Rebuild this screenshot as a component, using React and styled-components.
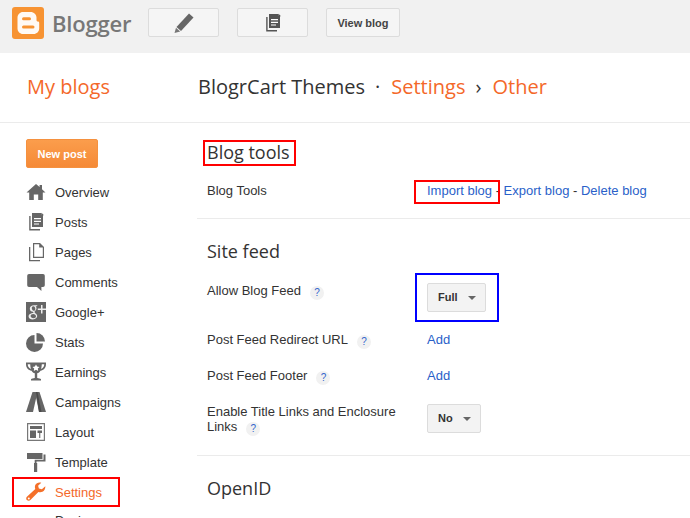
import React from 'react'
import styled, { createGlobalStyle } from 'styled-components'

const GlobalStyle = createGlobalStyle`
  html, body {
    margin: 0;
    padding: 0;
    height: 518px;
    overflow: hidden;
    background: #fff;
  }
  body {
    font-family: "Liberation Sans", Arial, sans-serif;
    font-size: 13px;
    color: #333;
  }
`

const PencilIcon = () => (
  <svg width="20" height="20" viewBox="0 0 20 20">
    <path d="M15 0.500l4.500 4L7 18l-4.500-4z" fill="#666" />
    <path d="M2 14.800l4.200 3.800-5.700 1.400z" fill="#777" />
  </svg>
)

const PostsIcon = ({ color = '#666' }) => (
  <svg width="20" height="20" viewBox="0 0 20 20">
    <path d="M6 1h9.500v1.600H17V15H6z" fill={color} />
    <path d="M15.500 0.800L18 3.200h-2.500z" fill={color} />
    <path d="M8 6h7v1.200H8zM8 8.700h7v1.200H8zM8 11.400h5v1.200H8z" fill="#fff" />
    <path d="M3.200 4H4.600v13H14v1.600H3.200z" fill={color} />
  </svg>
)

const HomeIcon = () => (
  <svg width="20" height="20" viewBox="0 0 20 20">
    <path d="M10 2L0.500 10.500h2.700V18h4.600v-5.500h4.400V18h4.600v-7.500h2.700L16 7.200V3h-2.400v2z" fill="#666" />
  </svg>
)

const PagesIcon = () => (
  <svg width="20" height="20" viewBox="0 0 20 20">
    <path d="M7 1h7l4 4v11H7zM8.200 2.200v12.600h8.600V5.600h-3.600V2.200z" fill="#666" />
    <path d="M3 5h1.300v13H14v1.200H3z" fill="#666" />
  </svg>
)

const CommentIcon = () => (
  <svg width="20" height="20" viewBox="0 0 20 20">
    <path d="M3 2h14a1.800 1.800 0 0 1 1.800 1.800v9.400A1.800 1.800 0 0 1 17 15h-1.600v4l-4.400-4H3a1.800 1.800 0 0 1-1.800-1.800V3.800A1.800 1.800 0 0 1 3 2z" fill="#666" />
  </svg>
)

const GooglePlusIcon = () => (
  <svg width="20" height="20" viewBox="0 0 20 20">
    <rect width="20" height="20" fill="#666" />
    <path d="M8 3.200c-2.500 0-4.200 1.500-4.200 3.500 0 1.800 1.400 3.100 3.100 3.100l.7 1.300c-2.500.2-5 1.100-5 3.300 0 1.900 2 3 4.200 3 2.700 0 4.400-1.500 4.400-3.300 0-2.400-2.700-2.800-2.700-4.100 0-1 2-1.500 2-3.700 0-1-.5-1.700-1-2.100h1.200l.9-1z" fill="#eee" />
    <path d="M7.300 4.300c1.200 0 2 1.300 2 2.700 0 1-.6 1.800-1.500 1.800-1.300 0-2-1.400-2-2.700 0-1.100.6-1.800 1.500-1.800zM7.200 12c1.600 0 2.800 1 2.800 2.300 0 1.200-1 1.900-2.500 1.900-1.700 0-2.900-.9-2.900-2.100 0-1.300 1.100-2.100 2.600-2.100z" fill="#666" />
    <path d="M15 3h1.500v3.500H20V8h-3.500v3.500H15V8h-3.200V6.500H15z" fill="#eee" />
  </svg>
)

const StatsIcon = () => (
  <svg width="20" height="20" viewBox="0 0 20 20">
    <path d="M8.500 3v8.500H17A8.500 8.500 0 1 1 8.500 3z" fill="#666" />
    <path d="M10.500 1A8.500 8.500 0 0 1 19 9.500h-8.500z" fill="#666" />
  </svg>
)

const TrophyIcon = () => (
  <svg width="20" height="20" viewBox="0 0 20 20">
    <path d="M0 0.500h20v1.500c0 4-2.500 6.300-5.500 6.800-.9 1.400-2 2.200-3.300 2.500v4.700c1.500.2 3.300.6 3.800 1.300v1.200H5v-1.200c.5-.7 2.300-1.100 3.800-1.300v-4.700c-1.300-.3-2.400-1.100-3.300-2.500C2.500 8.300 0 6 0 2zM1.700 2.200c.1 2.500 1.500 4 3.200 4.700-.4-1.400-.6-3-.7-4.700zm14.100 0c-.1 1.700-.3 3.300-.7 4.700 1.700-.7 3.100-2.200 3.200-4.700z" fill="#666" />
    <path d="M10 2.400l1.100 2.200 2.400.3-1.700 1.600.4 2.400L10 7.800l-2.200 1.100.4-2.400-1.700-1.600 2.400-.3z" fill="#fff" />
  </svg>
)

const CampaignsIcon = () => (
  <svg width="20" height="20" viewBox="0 0 20 20">
    <path d="M6.500 0h5L7 20H0z" fill="#666" />
    <path d="M9 0h4.500L20 20h-7z" fill="#666" />
    <path d="M10 0h1.500L15.500 20h-2.500z" fill="#4a4a4a" />
  </svg>
)

const LayoutIcon = () => (
  <svg width="20" height="20" viewBox="0 0 20 20">
    <path d="M1 1h18v18H1zM2.200 2.200v15.600h15.600V2.200z" fill="#777" />
    <path d="M4 4h12v3H4zM4 8.500h6V16H4zM11.500 8.500H16V11h-1.700v5h-1.100v-5h-1.700z" fill="#666" />
  </svg>
)

const RollerIcon = () => (
  <svg width="20" height="20" viewBox="0 0 20 20">
    <path d="M1 1h15.500v6H1z" fill="#666" />
    <path d="M17.500 2.500H19.500v7H10.500v2h-1.800V7.800h8.800z" fill="#666" />
    <path d="M8 11h3.200v9H8z" fill="#666" />
  </svg>
)

const WrenchIcon = () => (
  <svg width="20" height="20" viewBox="0 0 20 20">
    <path d="M19.300 4.200l-3.400 3-3-.6-.8-2.900L15.300.8c-2.400-.8-5 .1-6 2.300-.6 1.300-.5 2.700 0 3.900L.9 14.700c-1 1-.9 2.500 0 3.400 1 1 2.500 1 3.500 0l8-8.200c1.200.5 2.700.5 4-.1 2.100-1 3.100-3.400 2.900-5.600z" fill="#f4702a" />
    <circle cx="2.800" cy="16.500" r="1" fill="#fff" />
  </svg>
)

const BloggerLogo = () => (
  <svg width="32" height="32" viewBox="0 0 32 32">
    <rect width="32" height="32" rx="3" fill="#f79332" />
    <path d="M11 5h7.500C22 5 24.500 7.500 24.500 10.500V13c0 1 .8 1.500 1.500 1.500s1.200.5 1.200 1.500v5.500c0 3-2.500 5.500-5.500 5.500H11c-3 0-5.500-2.500-5.500-5.500v-11C5.500 7.500 8 5 11 5z" fill="#fff" opacity="0.95" />
    <rect x="10" y="10.200" width="9" height="3" rx="1.500" fill="#f79332" />
    <rect x="10" y="18.600" width="12.500" height="3" rx="1.500" fill="#f79332" />
  </svg>
)

const navItems = [
  { label: 'Overview', icon: <HomeIcon /> },
  { label: 'Posts', icon: <PostsIcon /> },
  { label: 'Pages', icon: <PagesIcon /> },
  { label: 'Comments', icon: <CommentIcon /> },
  { label: 'Google+', icon: <GooglePlusIcon /> },
  { label: 'Stats', icon: <StatsIcon /> },
  { label: 'Earnings', icon: <TrophyIcon /> },
  { label: 'Campaigns', icon: <CampaignsIcon /> },
  { label: 'Layout', icon: <LayoutIcon /> },
  { label: 'Template', icon: <RollerIcon /> },
  { label: 'Settings', icon: <WrenchIcon />, active: true },
  { label: 'Design', icon: null },
]

function App() {
  return (
    <Page>
      <GlobalStyle />
      <TopBar>
        <LogoLink>
          <BloggerLogo />
          <LogoText>Blogger</LogoText>
        </LogoLink>
        <TopButton><PencilIcon /></TopButton>
        <TopButton><PostsIcon color="#555" /></TopButton>
        <ViewBlog>View blog</ViewBlog>
      </TopBar>

      <TitleBar>
        <MyBlogs>My blogs</MyBlogs>
        <Crumbs>
          <span>BlogrCart Themes</span>
          <CrumbSep>·</CrumbSep>
          <CrumbLink>Settings</CrumbLink>
          <CrumbSep>›</CrumbSep>
          <CrumbLink>Other</CrumbLink>
        </Crumbs>
      </TitleBar>

      <Body>
        <Sidebar>
          <NewPost>New post</NewPost>
          <NavList>
            {navItems.map((item) => (
              <NavItem key={item.label} $active={item.active}>
                <NavIcon>{item.icon}</NavIcon>
                {item.label}
                {item.active && <SettingsMark />}
              </NavItem>
            ))}
          </NavList>
        </Sidebar>

        <Main>
          <Section>
            <SectionTitle>
              <TitleMarked>Blog tools<RedTitleMark /></TitleMarked>
            </SectionTitle>
            <Row $height={27}>
              <RowLabel>Blog Tools</RowLabel>
              <RowValue>
                <ImportWrap>
                  <Link>Import blog</Link>
                  <ImportMark />
                </ImportWrap>
                {' - '}
                <Link>Export blog</Link>
                {' - '}
                <Link>Delete blog</Link>
              </RowValue>
            </Row>
          </Section>

          <Section>
            <SectionTitle $gap={19}>Site feed</SectionTitle>
            <Row $height={49}>
              <RowLabel>Allow Blog Feed<Help>?</Help></RowLabel>
              <RowValue>
                <SelectWrap>
                  <Select $width={59}>Full<Caret /></Select>
                  <BlueMark />
                </SelectWrap>
              </RowValue>
            </Row>
            <Row $height={36}>
              <RowLabel>Post Feed Redirect URL<Help>?</Help></RowLabel>
              <RowValue><Link>Add</Link></RowValue>
            </Row>
            <Row $height={36}>
              <RowLabel>Post Feed Footer<Help>?</Help></RowLabel>
              <RowValue><Link>Add</Link></RowValue>
            </Row>
            <Row $height={44}>
              <RowLabel>
                Enable Title Links and Enclosure Links<Help>?</Help>
              </RowLabel>
              <RowValue>
                <Select $width={54}>No<Caret /></Select>
              </RowValue>
            </Row>
          </Section>

          <Section>
            <SectionTitle>OpenID</SectionTitle>
          </Section>
        </Main>
      </Body>
    </Page>
  )
}

export default App

const Page = styled.div`
  width: 690px;
  height: 518px;
  overflow: hidden;
`

const TopBar = styled.div`
  height: 53px;
  box-sizing: border-box;
  background: #f1f1f1;
  display: flex;
  align-items: flex-start;
  padding: 7px 0 0 12px;
`

const LogoLink = styled.div`
  display: flex;
  align-items: center;
  height: 32px;
  width: 136px;
  gap: 8px;
`

const LogoText = styled.span`
  font-family: "Open Sans", sans-serif;
  font-size: 22px;
  color: #777;
  font-weight: 600;
  letter-spacing: -0.2px;
`

const TopButton = styled.div`
  width: 71px;
  height: 29px;
  margin-top: 1px;
  margin-right: 18px;
  box-sizing: border-box;
  border: 1px solid #dcdcdc;
  border-radius: 2px;
  background: #f5f5f5;
  display: flex;
  align-items: center;
  justify-content: center;
`

const ViewBlog = styled(TopButton)`
  width: 74px;
  font-size: 11px;
  font-weight: bold;
  color: #444;
`

const TitleBar = styled.div`
  height: 70px;
  box-sizing: border-box;
  border-bottom: 1px solid #ebebeb;
  display: flex;
  align-items: center;
  font-family: "Open Sans", sans-serif;
  font-size: 20px;
  padding-bottom: 2px;
`

const MyBlogs = styled.div`
  width: 198px;
  padding-left: 27px;
  box-sizing: border-box;
  color: #f4682a;
`

const Crumbs = styled.div`
  display: flex;
  color: #333;
  white-space: nowrap;
`

const CrumbSep = styled.span`
  margin: 0 11px 0 10px;
`

const CrumbLink = styled.span`
  color: #f4682a;
`

const Body = styled.div`
  display: flex;
`

const Sidebar = styled.div`
  width: 197px;
  flex: none;
  padding: 16px 0 0 26px;
  box-sizing: border-box;
`

const NewPost = styled.div`
  width: 72px;
  height: 29px;
  box-sizing: border-box;
  border: 1px solid #f5913f;
  border-radius: 2px;
  background: linear-gradient(#fb9d4c, #f58a37);
  color: #fff;
  font-size: 11px;
  font-weight: bold;
  display: flex;
  align-items: center;
  justify-content: center;
  margin-bottom: 9px;
`

const NavList = styled.div`
  display: flex;
  flex-direction: column;
`

const NavItem = styled.div`
  position: relative;
  height: 30px;
  display: flex;
  align-items: center;
  gap: 9px;
  color: ${(p) => (p.$active ? '#f4682a' : '#333')};
  &:last-child {
    margin-top: -2px;
  }
`

const NavIcon = styled.span`
  width: 20px;
  height: 20px;
  flex: none;
  display: block;
`

const Mark = styled.span`
  position: absolute;
  box-sizing: border-box;
  border: 2px solid #f00;
  pointer-events: none;
`

const SettingsMark = styled(Mark)`
  left: -14px;
  top: 0;
  width: 108px;
  height: 30px;
`

const Main = styled.div`
  flex: 1;
  min-width: 0;
`

const Section = styled.div`
  padding: 19px 0 7px 10px;
  border-bottom: 1px solid #ebebeb;
  &:first-child {
    padding-top: 16px;
    padding-bottom: 8px;
  }
  &:last-child {
    border-bottom: none;
  }
`

const SectionTitle = styled.div`
  font-family: "Open Sans", sans-serif;
  font-size: 18px;
  line-height: 26px;
  color: #333;
  margin-bottom: ${(p) => p.$gap || 18}px;
`

const TitleMarked = styled.span`
  position: relative;
  display: inline-block;
`

const RedTitleMark = styled(Mark)`
  left: -4px;
  top: 1px;
  width: 93px;
  height: 26px;
`

const Row = styled.div`
  display: flex;
  min-height: ${(p) => p.$height}px;
  align-items: flex-start;
`

const RowLabel = styled.div`
  width: 220px;
  flex: none;
  line-height: 15px;
  color: #333;
`

const RowValue = styled.div`
  color: #333;
  line-height: 15px;
  white-space: nowrap;
`

const Link = styled.span`
  color: #2a5fc9;
`

const ImportWrap = styled.span`
  position: relative;
  display: inline-block;
`

const ImportMark = styled(Mark)`
  left: -13px;
  top: -3px;
  width: 86px;
  height: 24px;
`

const Help = styled.span`
  display: inline-flex;
  width: 14px;
  height: 14px;
  border-radius: 50%;
  background: #f1f1f1;
  color: #3366cc;
  font-size: 10px;
  align-items: center;
  justify-content: center;
  margin-left: 9px;
  vertical-align: -1px;
`

const SelectWrap = styled.div`
  position: relative;
`

const Select = styled.div`
  width: ${(p) => p.$width}px;
  height: 29px;
  box-sizing: border-box;
  border: 1px solid #dcdcdc;
  border-radius: 2px;
  background: #f3f3f3;
  color: #333;
  font-size: 11px;
  font-weight: bold;
  display: flex;
  align-items: center;
  padding-left: 10px;
`

const Caret = styled.span`
  margin-left: 10px;
  width: 0;
  height: 0;
  border-left: 4px solid transparent;
  border-right: 4px solid transparent;
  border-top: 4px solid #666;
  margin-top: 1px;
`

const BlueMark = styled(Mark)`
  border-color: #00f;
  left: -12px;
  top: -10px;
  width: 84px;
  height: 49px;
`
